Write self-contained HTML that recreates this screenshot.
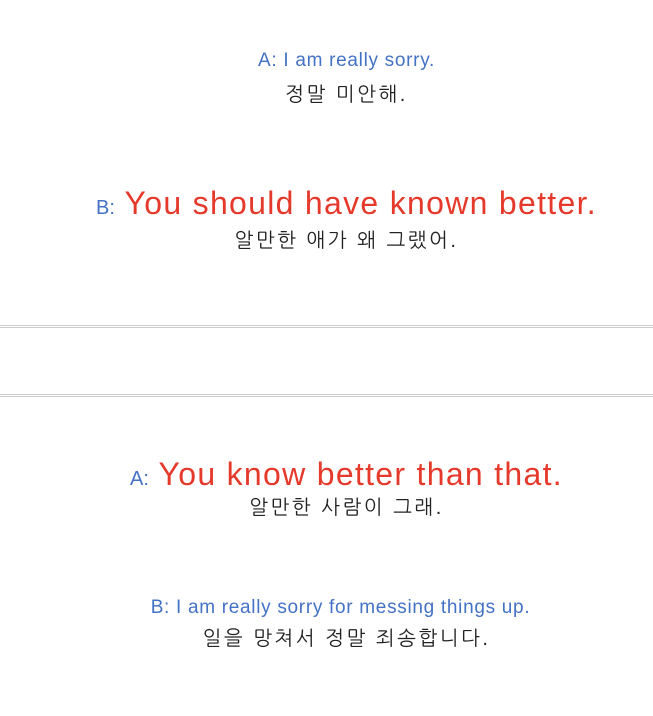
<!DOCTYPE html>
<html><head><meta charset="utf-8"><style>
body{margin:0;width:653px;height:716px;background:#fff;position:relative;overflow:hidden;font-family:"Liberation Sans","Noto Sans CJK KR",sans-serif}
.l{position:absolute;left:20px;width:653px;text-align:center;white-space:nowrap;line-height:1}
.b{color:#4472c4;font-size:19px;letter-spacing:0.7px}
.k{color:#222;font-size:20px;letter-spacing:2.5px;font-family:"Liberation Sans","NanumGothic","Noto Sans CJK KR",sans-serif}
.r{color:#e53a2b;font-size:32px;letter-spacing:1.3px}
.r span{color:#4472c4;font-size:20px;letter-spacing:0}
.hr{position:absolute;left:0;width:653px;height:1px;background:#ccc}
</style></head><body>
<div class="l b" style="top:51px">A: I am really sorry.</div>
<div class="l k" style="top:85px">정말 미안해.</div>
<div class="l r" style="top:187px"><span>B:</span> You should have known better.</div>
<div class="l k" style="top:231px">알만한 애가 왜 그랬어.</div>
<div class="hr" style="top:325px"></div><div class="hr" style="top:327px"></div>
<div class="hr" style="top:394px"></div><div class="hr" style="top:396px"></div>
<div class="l r" style="top:458px"><span>A:</span> You know better than that.</div>
<div class="l k" style="top:498px">알만한 사람이 그래.</div>
<div class="l b" style="top:598px;left:14px">B: I am really sorry for messing things up.</div>
<div class="l k" style="top:629px">일을 망쳐서 정말 죄송합니다.</div>
</body></html>
